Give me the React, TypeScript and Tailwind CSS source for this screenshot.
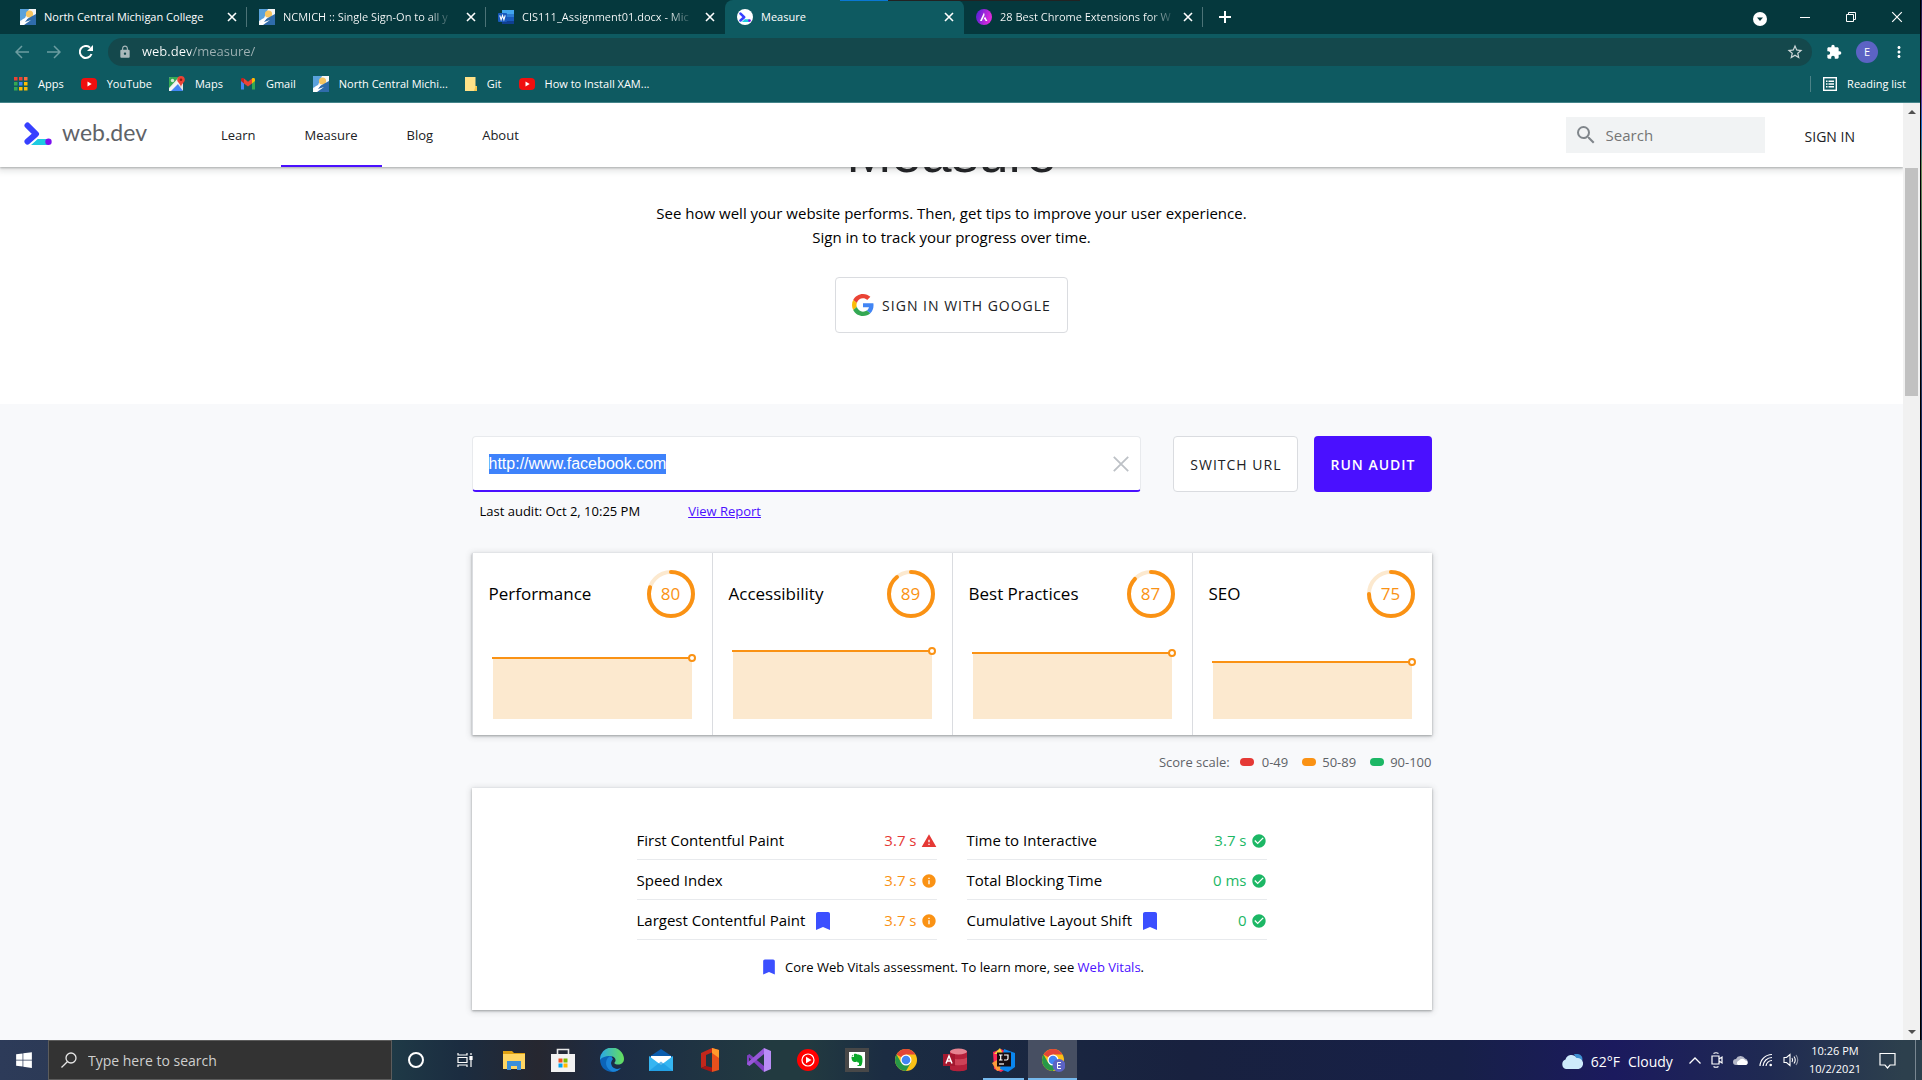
import { useEffect, useRef, type ReactNode } from "react";
import {
  MdBookmark,
  MdCheckCircle,
  MdExtension,
  MdInfo,
  MdLock,
  MdMoreVert,
  MdSearch,
  MdStarBorder,
  MdWarning,
} from "react-icons/md";
import { FaWindows } from "react-icons/fa";

/* ---------- Site and favicon drawings ---------- */

function CollegeIcon() {
  return (
    <svg viewBox="0 0 16 16" className="size-4 shrink-0" aria-hidden="true">
      <rect width="16" height="16" fill="#f4f6f8" />
      <path d="M0 0h9L5 9l-5 3z" fill="#5aa2dc" />
      <circle cx="9.5" cy="5" r="3.6" fill="#f7c560" />
      <path d="M7 10 16 5v11H1z" fill="#2f6cab" />
      <path d="m0 16 3-6 5-1-3 4 6-2-7 5z" fill="#fff" />
    </svg>
  );
}

function WordIcon() {
  return (
    <svg viewBox="0 0 16 16" className="size-4 shrink-0" aria-hidden="true">
      <path d="M4 1h12v4H4z" fill="#41a5ee" />
      <path d="M4 5h12v3H4z" fill="#2b7cd3" />
      <path d="M4 8h12v4H4z" fill="#185abd" />
      <path d="M4 12h12v3H4z" fill="#103f91" />
      <rect y="4" width="9" height="9" rx="1" fill="#185abd" />
      <path d="m1.8 6.3 1.3 4.4 1.4-4.2 1.4 4.2 1.3-4.4" fill="none" stroke="#fff" strokeWidth="1.1" />
    </svg>
  );
}

function WebDevMark({ className }: { className: string }) {
  return (
    <svg viewBox="0 0 28 23" className={className} aria-hidden="true">
      <path d="M14 17h10v6H8z" fill="#1ecbe1" />
      <path d="M3.500 3.500 12 12 3.500 19.500" fill="none" stroke="#3740ff" strokeWidth="6" strokeLinecap="round" strokeLinejoin="round" />
      <path d="m7 23 7-6 5 6z" fill="#1ecbe1" />
      <circle cx="24.500" cy="19.800" r="3.200" fill="#7b0ff0" />
    </svg>
  );
}

function WebDevFavicon() {
  return (
    <span className="flex size-4 shrink-0 items-center justify-center rounded-full bg-white">
      <WebDevMark className="h-2.5 w-3" />
    </span>
  );
}

function AstraIcon() {
  return (
    <svg viewBox="0 0 16 16" className="size-4 shrink-0" aria-hidden="true">
      <defs>
        <linearGradient id="astra" x1="0" y1="0" x2="1" y2="0.3">
          <stop offset="0" stopColor="#4a1fd6" />
          <stop offset="1" stopColor="#e02bdc" />
        </linearGradient>
      </defs>
      <circle cx="8" cy="8" r="8" fill="url(#astra)" />
      <path d="M8 3.500 4 12h1.800L8.600 6zM9 7.500l-1.400 2.800h1.200l.8 1.700h1.800z" fill="#fff" />
    </svg>
  );
}

function YouTubeIcon() {
  return (
    <svg viewBox="0 0 16 16" className="size-4 shrink-0" aria-hidden="true">
      <rect y="2" width="16" height="12" rx="4" fill="#f00f0f" />
      <path d="m6.500 5.500 4.200 2.500-4.200 2.500z" fill="#fff" />
    </svg>
  );
}

function AppsIcon() {
  const colours = ["#ea4335", "#ea4335", "#fb6a3d", "#34a853", "#4285f4", "#fbbc04", "#34a853", "#fbbc04", "#fbbc04"];
  return (
    <svg viewBox="0 0 14 14" className="size-3.5 shrink-0" aria-hidden="true">
      {colours.map((c, i) => (
        <rect key={i} x={(i % 3) * 5} y={Math.floor(i / 3) * 5} width="3.500" height="3.500" fill={c} />
      ))}
    </svg>
  );
}

function MapsIcon() {
  return (
    <svg viewBox="0 0 16 16" className="size-4 shrink-0" aria-hidden="true">
      <rect y="1" width="14" height="14" rx="1.500" fill="#e8e8e8" />
      <path d="M0 2.500A1.500 1.500 0 0 1 1.500 1H10L0 12z" fill="#34a853" />
      <path d="m0 15 8-8 6 8z" fill="#4285f4" />
      <path d="M0 13 11 2l2 2L2 15H0z" fill="#f5f5f5" />
      <circle cx="3.500" cy="4.500" r="1.700" fill="#cfe9d5" />
      <path d="M12 0a3.800 3.800 0 0 0-3.800 3.800C8.200 6.500 11 7 12 11c1-4 3.800-4.500 3.800-7.200A3.800 3.800 0 0 0 12 0" fill="#ea4335" />
      <circle cx="12" cy="3.800" r="1.300" fill="#8c1d14" />
    </svg>
  );
}

function GmailIcon() {
  return (
    <svg viewBox="0 0 16 16" className="size-4 shrink-0" aria-hidden="true">
      <path d="M1 4v9.500h3V7z" fill="#4285f4" />
      <path d="M12 7v6.500h3V4z" fill="#34a853" />
      <path d="M1 3.500C1 2 3 1.700 4 2.500V7.500L1 5z" fill="#c5221f" />
      <path d="m4 2.500 4 3.200 4-3.200v5L8 10.500l-4-3z" fill="#ea4335" />
      <path d="M12 2.500c1-.8 3-.5 3 1V5l-3 2.500z" fill="#fbbc04" />
    </svg>
  );
}

function FolderIcon() {
  return (
    <svg viewBox="0 0 12 14" className="h-3.5 w-3 shrink-0" aria-hidden="true">
      <path d="M0 0h10.500v9H12v5H0z" fill="#ffe288" />
      <path d="M10.500 9H12v5H9z" fill="#f3c64d" />
    </svg>
  );
}

function GoogleG() {
  return (
    <svg viewBox="0 0 48 48" className="size-[22px] shrink-0" aria-hidden="true">
      <path fill="#EA4335" d="M24 9.500c3.540 0 6.710 1.220 9.210 3.600l6.850-6.850C35.900 2.380 30.470 0 24 0 14.620 0 6.510 5.380 2.560 13.220l7.980 6.190C12.430 13.720 17.740 9.500 24 9.500z" />
      <path fill="#4285F4" d="M46.980 24.550c0-1.570-.15-3.090-.38-4.550H24v9.020h12.940c-.58 2.960-2.260 5.480-4.780 7.180l7.730 6c4.510-4.180 7.090-10.360 7.090-17.650z" />
      <path fill="#FBBC05" d="M10.530 28.590c-.48-1.450-.76-2.990-.76-4.590s.27-3.140.76-4.590l-7.980-6.190C.92 16.460 0 20.120 0 24c0 3.880.92 7.540 2.560 10.780l7.970-6.190z" />
      <path fill="#34A853" d="M24 48c6.480 0 11.930-2.130 15.890-5.810l-7.730-6c-2.150 1.450-4.920 2.300-8.160 2.300-6.260 0-11.570-4.220-13.470-9.910l-7.980 6.190C6.510 42.620 14.620 48 24 48z" />
    </svg>
  );
}

function Cross({ className }: { className: string }) {
  return (
    <svg viewBox="0 0 10 10" className={className} fill="none" stroke="currentColor" aria-hidden="true">
      <path d="m1 1 8 8M9 1 1 9" />
    </svg>
  );
}

/* ---------- Browser chrome ---------- */

const tabs: { title: string; icon: ReactNode; active?: boolean }[] = [
  { title: "North Central Michigan College", icon: <CollegeIcon /> },
  { title: "NCMICH :: Single Sign-On to all y", icon: <CollegeIcon /> },
  { title: "CIS111_Assignment01.docx - Mic", icon: <WordIcon /> },
  { title: "Measure", icon: <WebDevFavicon />, active: true },
  { title: "28 Best Chrome Extensions for W", icon: <AstraIcon /> },
];

function TabStrip() {
  return (
    <div className="relative flex h-[34px] items-stretch bg-[#05383d] pl-2 text-white">
      <div className="absolute top-0 left-[840px] flex h-px w-60">
        <span className="w-12 bg-[#0a78d4]" />
        <span className="flex-1 bg-[#222]" />
      </div>
      <div role="tablist" className="flex">
        {tabs.map((t, i) => {
          const divider = !t.active && i !== 2;
          const fades = i !== 0 && !t.active;
          return (
            <div
              key={t.title}
              className={`flex w-[239px] items-center pl-3 ${t.active ? "rounded-t-lg bg-[#0e5a61]" : ""}`}
            >
              {t.icon}
              <button
                type="button"
                role="tab"
                aria-selected={!!t.active}
                className="ml-2 min-w-0 flex-1 text-left text-[11px] whitespace-nowrap"
              >
                <span
                  className={
                    fades ? "bg-linear-to-r from-white from-88% to-[#2f5a5e] bg-clip-text text-transparent" : ""
                  }
                >
                  {t.title}
                </span>
              </button>
              <button type="button" aria-label={`Close ${t.title}`} className="ml-1 flex size-4 items-center justify-center">
                <Cross className="size-2.5 stroke-[1.600]" />
              </button>
              <span className={`ml-1.5 h-5 w-px ${divider ? "bg-[#4c7377]" : ""}`} />
            </div>
          );
        })}
      </div>
      <button type="button" aria-label="New tab" className="flex w-11 items-center justify-center">
        <svg viewBox="0 0 12 12" className="size-3" stroke="currentColor" strokeWidth="2" aria-hidden="true">
          <path d="M6 0v12M0 6h12" />
        </svg>
      </button>
      <div className="ml-auto flex items-center">
        <button type="button" aria-label="Search tabs" className="mt-1 mr-1 flex w-9 justify-center">
          <svg viewBox="0 0 14 14" className="size-3.5" aria-hidden="true">
            <circle cx="7" cy="7" r="7" fill="#fff" />
            <path d="M4 5.500h6L7 9z" fill="#05383d" />
          </svg>
        </button>
        <button type="button" aria-label="Minimize" className="flex h-7 w-[46px] items-center justify-center">
          <span className="h-px w-2.5 bg-white" />
        </button>
        <button type="button" aria-label="Restore" className="flex h-7 w-[46px] items-center justify-center">
          <svg viewBox="0 0 10 10" className="size-2.5" fill="none" stroke="currentColor" aria-hidden="true">
            <path d="M.5 2.500h7v7h-7zM2.500 2.500v-2h7v7h-2" />
          </svg>
        </button>
        <button type="button" aria-label="Close" className="flex h-7 w-[46px] items-center justify-center">
          <Cross className="size-3" />
        </button>
      </div>
    </div>
  );
}

function Toolbar() {
  return (
    <div className="flex h-9 items-center bg-[#0e5a61] pr-3 pl-2 text-white">
      <button type="button" aria-label="Back" className="flex w-7 justify-center text-[#6c9da1]">
        <svg viewBox="0 0 14 14" className="size-3.5" fill="none" stroke="currentColor" strokeWidth="1.500" aria-hidden="true">
          <path d="M14 7H1M7 1 1 7l6 6" />
        </svg>
      </button>
      <button type="button" aria-label="Forward" className="ml-1 flex w-7 justify-center text-[#6c9da1]">
        <svg viewBox="0 0 14 14" className="size-3.5" fill="none" stroke="currentColor" strokeWidth="1.500" aria-hidden="true">
          <path d="M0 7h13M7 1l6 6-6 6" />
        </svg>
      </button>
      <button type="button" aria-label="Reload" className="ml-1 flex w-7 justify-center">
        <svg viewBox="0 0 14 14" className="size-3.5" aria-hidden="true">
          <path d="M12.500 9A6 6 0 1 1 11 2.600" fill="none" stroke="#fff" strokeWidth="2" />
          <path d="M14 0v6H8z" fill="#fff" />
        </svg>
      </button>
      <div className="ml-2 flex h-7 flex-1 items-center rounded-full bg-[#14484c] pr-2 pl-2.5">
        <MdLock className="size-3.5 text-[#a9b8ba]" />
        <input
          aria-label="Address"
          defaultValue="web.dev/measure/"
          className="ml-2.5 flex-1 bg-linear-to-r from-white from-[49px] to-[#9fb2b4] to-[49px] bg-clip-text text-[13px] text-transparent outline-none"
        />
        <button type="button" aria-label="Bookmark this page">
          <MdStarBorder className="size-[18px] text-[#cfd8d9]" />
        </button>
      </div>
      <button type="button" aria-label="Extensions" className="ml-3.5">
        <MdExtension className="size-4" />
      </button>
      <button type="button" aria-label="Profile" className="ml-3.5 size-[22px] rounded-full bg-[#5c63c4] text-[11px]">
        E
      </button>
      <button type="button" aria-label="Menu" className="ml-3">
        <MdMoreVert className="size-[18px]" />
      </button>
    </div>
  );
}

const bookmarks: { label: string; icon: ReactNode }[] = [
  { label: "Apps", icon: <AppsIcon /> },
  { label: "YouTube", icon: <YouTubeIcon /> },
  { label: "Maps", icon: <MapsIcon /> },
  { label: "Gmail", icon: <GmailIcon /> },
  { label: "North Central Michi...", icon: <CollegeIcon /> },
  { label: "Git", icon: <FolderIcon /> },
  { label: "How to Install XAM...", icon: <YouTubeIcon /> },
];

function BookmarksBar() {
  return (
    <div className="flex h-[33px] items-center border-b border-[#44848a] bg-[#0e5a61] px-3.5 pb-1 text-[11px] text-white">
      <nav aria-label="Bookmarks" className="flex gap-[17px]">
        {bookmarks.map((b) => (
          <a key={b.label} href="#" className="flex items-center gap-2.5 whitespace-nowrap">
            {b.icon}
            {b.label}
          </a>
        ))}
      </nav>
      <span className="ml-auto h-4 w-px bg-[#4c8287]" />
      <button type="button" className="ml-3 flex items-center gap-2.5 whitespace-nowrap">
        <svg viewBox="0 0 14 14" className="size-3.5" fill="none" stroke="currentColor" aria-hidden="true">
          <rect x=".7" y=".7" width="12.600" height="12.600" strokeWidth="1.400" />
          <path d="M3 4.200h1.500M3 7h1.500M3 9.800h1.500M5.500 4.200H11M5.500 7H11M5.500 9.800H11" strokeWidth="1.400" />
        </svg>
        Reading list
      </button>
    </div>
  );
}

/* ---------- Page ---------- */

const navLinks = ["Learn", "Measure", "Blog", "About"];

function SiteHeader() {
  return (
    <header className="relative z-10 flex h-16 shrink-0 items-center bg-white shadow-[0_1px_2px_rgba(60,64,67,0.35),0_2px_6px_2px_rgba(60,64,67,0.15)]">
      <a href="#" className="ml-6 flex w-[173px] items-center gap-2.5 pb-1">
        <WebDevMark className="h-[23px] w-7" />
        <span className="pb-0.5 font-['Lato'] text-[23px] leading-7 text-[#5f6368]">web.dev</span>
      </a>
      <nav className="flex h-full gap-px text-[13px] font-medium text-[#202124]">
        {navLinks.map((l) => (
          <a
            key={l}
            href="#"
            className={`flex items-center border-b-2 px-6 pt-1 ${l === "Measure" ? "border-[#4a10ff]" : "border-transparent"}`}
          >
            {l}
          </a>
        ))}
      </nav>
      <label className="ml-auto flex h-9 w-[199px] items-center gap-2 bg-[#f1f3f4] pl-2">
        <MdSearch className="size-6 text-[#80868b]" />
        <input
          type="search"
          aria-label="Search"
          placeholder="Search"
          className="w-32 bg-transparent text-[15px] outline-none placeholder:text-[#757575]"
        />
      </label>
      <a href="#" className="mr-12 ml-10 pt-0.5 text-[14px] font-medium text-[#202124]">
        SIGN IN
      </a>
    </header>
  );
}

function Hero() {
  return (
    <section className="flex shrink-0 flex-col items-center bg-white pb-[71px]">
      <h1 className="-mt-11 font-['Liberation_Sans'] text-[54px] leading-[60px] text-[#202124]">Measure</h1>
      <p className="mt-4.5 text-center text-[15px] leading-6 text-black">
        See how well your website performs. Then, get tips to improve your user experience.
        <br />
        Sign in to track your progress over time.
      </p>
      <button
        type="button"
        className="mt-7 flex h-14 items-center gap-2 rounded-sm border border-[#dadce0] px-4 text-[14px] font-medium tracking-[1px] text-[#202124]"
      >
        <GoogleG />
        SIGN IN WITH GOOGLE
      </button>
    </section>
  );
}

function AuditForm() {
  const field = useRef<HTMLInputElement>(null);
  useEffect(() => {
    field.current?.focus();
    field.current?.select();
  }, []);
  return (
    <form onSubmit={(e) => e.preventDefault()}>
      <div className="flex items-start">
        <div className="flex h-14 flex-1 items-center rounded-sm border border-b-2 border-[#e8eaed] border-b-[#4a10ff] bg-white pr-2.5 pl-4">
          <input
            ref={field}
            type="text"
            aria-label="Website URL"
            defaultValue="http://www.facebook.com"
            className="min-w-0 flex-1 font-['Liberation_Sans'] text-base leading-5 outline-none selection:bg-[#3e82fb] selection:text-white"
          />
          <button type="button" aria-label="Clear" className="text-[#bdc1c6]">
            <Cross className="size-[18px]" />
          </button>
        </div>
        <button
          type="button"
          className="ml-8 h-14 rounded-sm border border-[#dadce0] bg-white px-4 text-[14px] font-medium tracking-[1px] text-[#202124]"
        >
          SWITCH URL
        </button>
        <button
          type="submit"
          className="ml-4 h-14 rounded-sm bg-[#4a10ff] px-4 text-[14px] font-semibold tracking-[1px] text-white"
        >
          RUN AUDIT
        </button>
      </div>
      <p className="mt-[9px] flex gap-12 pl-2 text-[13px] leading-5 text-black">
        <span>Last audit: Oct 2, 10:25 PM</span>
        <a href="#" className="text-[#4a10ff] underline">
          View Report
        </a>
      </p>
    </form>
  );
}

const scores = [
  { name: "Performance", score: 80 },
  { name: "Accessibility", score: 89 },
  { name: "Best Practices", score: 87 },
  { name: "SEO", score: 75 },
];

function Gauge({ score }: { score: number }) {
  return (
    <span className="relative mr-px flex size-12 items-center justify-center text-[17px] font-medium text-[#fa9214]">
      <svg viewBox="0 0 48 48" className="absolute inset-0 -rotate-90" fill="none" strokeWidth="4" aria-hidden="true">
        <circle cx="24" cy="24" r="22" stroke="#fce9cf" />
        <circle
          cx="24"
          cy="24"
          r="22"
          stroke="#fa9214"
          pathLength="100"
          strokeDasharray={`${score} 100`}
          strokeLinecap="round"
        />
      </svg>
      {score}
    </span>
  );
}

function ScoreCard({ name, score }: { name: string; score: number }) {
  const y = 76 - Math.round(score * 0.76);
  return (
    <article className="flex flex-1 flex-col border-l border-[#dadce0] px-4 pt-[17px] pb-4">
      <div className="flex items-center justify-between">
        <h2 className="text-[17px] font-medium text-black">{name}</h2>
        <Gauge score={score} />
      </div>
      <svg viewBox="0 0 207 76" className="mt-[25px] h-[76px] w-full overflow-visible" role="img" aria-label={`${name} history`}>
        <rect x="4" y={y} width="199" height={76 - y} fill="#fce9cf" />
        <path d={`M3 ${y}h200`} stroke="#fa9214" strokeWidth="2" />
        <circle cx="203" cy={y} r="3" fill="#fff" stroke="#fa9214" strokeWidth="2" />
      </svg>
    </article>
  );
}

const cardShadow = "shadow-[0_1px_2px_rgba(60,64,67,0.4),0_1px_6px_1px_rgba(60,64,67,0.18)]";

function ScoreLegend() {
  return (
    <div className="mt-[15px] flex items-center justify-end text-[13px] leading-6 text-[#5f6368]">
      Score scale:
      <span className="mr-2 ml-2.5 h-2 w-3.5 rounded-full bg-[#e53935]" />
      0-49
      <span className="mr-1.5 ml-3.5 h-2 w-3.5 rounded-full bg-[#fa9214]" />
      50-89
      <span className="mr-1.5 ml-3.5 h-2 w-3.5 rounded-full bg-[#1cb765]" />
      90-100
    </div>
  );
}

type Level = "fail" | "warn" | "pass";
type Metric = { name: string; value: string; level: Level; vital?: boolean };

const levelColour: Record<Level, string> = {
  fail: "text-[#e53935]",
  warn: "text-[#fa9214]",
  pass: "text-[#1cb765]",
};
const levelIcon: Record<Level, ReactNode> = {
  fail: <MdWarning className="size-4" />,
  warn: <MdInfo className="size-4" />,
  pass: <MdCheckCircle className="size-4" />,
};

const metricColumns: Metric[][] = [
  [
    { name: "First Contentful Paint", value: "3.7 s", level: "fail" },
    { name: "Speed Index", value: "3.7 s", level: "warn" },
    { name: "Largest Contentful Paint", value: "3.7 s", level: "warn", vital: true },
  ],
  [
    { name: "Time to Interactive", value: "3.7 s", level: "pass" },
    { name: "Total Blocking Time", value: "0 ms", level: "pass" },
    { name: "Cumulative Layout Shift", value: "0", level: "pass", vital: true },
  ],
];

function MetricsPanel() {
  return (
    <section className={`mt-3.5 bg-white pt-8 pb-[31px] ${cardShadow}`}>
      <div className="mx-auto grid max-w-[630px] grid-cols-2 gap-[30px]">
        {metricColumns.map((col, i) => (
          <dl key={i}>
            {col.map((m) => (
              <div key={m.name} className="flex h-10 items-center justify-between border-b border-[#e8eaed] pt-0.5 text-[15px]">
                <dt className="flex items-center gap-1.5 text-black">
                  {m.name}
                  {m.vital && <MdBookmark className="size-6 text-[#3b4fff]" />}
                </dt>
                <dd className={`flex items-center gap-1 ${levelColour[m.level]}`}>
                  {m.value}
                  {levelIcon[m.level]}
                </dd>
              </div>
            ))}
          </dl>
        ))}
      </div>
      <p className="mt-[15px] flex items-center justify-center gap-1.5 text-[13px] leading-6 text-black">
        <MdBookmark className="size-5 text-[#3b4fff]" />
        <span>
          Core Web Vitals assessment. To learn more, see{" "}
          <a href="#" className="text-[#4a10ff]">
            Web Vitals
          </a>
          .
        </span>
      </p>
    </section>
  );
}

function Scrollbar() {
  return (
    <div className="flex w-[17px] shrink-0 flex-col items-center bg-[#f1f1f1]">
      <button type="button" aria-label="Scroll up" className="flex h-[17px] w-full items-center justify-center">
        <svg viewBox="0 0 8 4" className="h-1 w-2" aria-hidden="true">
          <path d="M4 0 8 4H0z" fill="#505050" />
        </svg>
      </button>
      <div className="mt-12 h-[228px] w-[13px] bg-[#c1c1c1]" />
      <button type="button" aria-label="Scroll down" className="mt-auto flex h-[17px] w-full items-center justify-center">
        <svg viewBox="0 0 8 4" className="h-1 w-2" aria-hidden="true">
          <path d="M4 4 0 0h8z" fill="#505050" />
        </svg>
      </button>
    </div>
  );
}

/* ---------- Taskbar ---------- */

function ChromeIcon({ badge }: { badge?: boolean }) {
  return (
    <svg viewBox="0 0 24 24" className="size-6" aria-hidden="true">
      <circle cx="12" cy="12" r="11" fill="#fbc116" />
      <path d="M12 12 2.500 6.500A11 11 0 0 1 21.500 6.500H12z" fill="#e24537" />
      <path d="M2.500 6.500A11 11 0 0 0 12 23l4.800-8.200L12 12l-4.800 2.700z" fill="#279847" />
      <circle cx="12" cy="12" r="5.500" fill="#fff" />
      <circle cx="12" cy="12" r="4.300" fill="#4285f4" />
      {badge && (
        <>
          <circle cx="18" cy="17.500" r="6.500" fill="#5c63c4" />
          <path d="M20 14.500h-3.500v6H20M16.500 17.500h3" fill="none" stroke="#fff" />
        </>
      )}
    </svg>
  );
}

const apps: { name: string; icon: ReactNode; state?: "open" | "active" }[] = [
  {
    name: "File Explorer",
    icon: (
      <svg viewBox="0 0 24 24" className="size-6" aria-hidden="true">
        <path d="M1 3h9l2 2h11v15H1z" fill="#dfa112" />
        <path d="M1 6h22v15H1z" fill="#ffd663" />
        <path d="M5 13h14v9h-4v-4H9v4H5z" fill="#3b8fd9" />
      </svg>
    ),
  },
  {
    name: "Microsoft Store",
    icon: (
      <svg viewBox="0 0 24 24" className="size-6" aria-hidden="true">
        <path d="M6.500 7V1.500h11V7" fill="none" stroke="#e8e8e8" strokeWidth="1.600" />
        <path d="M0 6h24v18H0z" fill="#f2f2f2" />
        <path d="M7.500 10.500h4v4h-4z" fill="#f25022" />
        <path d="M12.500 10.500h4v4h-4z" fill="#7fba00" />
        <path d="M7.500 15.500h4v4h-4z" fill="#00a4ef" />
        <path d="M12.500 15.500h4v4h-4z" fill="#ffb900" />
      </svg>
    ),
  },
  {
    name: "Edge",
    icon: (
      <svg viewBox="0 0 24 24" className="size-6" aria-hidden="true">
        <defs>
          <linearGradient id="edgeTop" x1="0" x2="1">
            <stop offset="0" stopColor="#2aa8e8" />
            <stop offset="1" stopColor="#66e05a" />
          </linearGradient>
        </defs>
        <path d="M12 0a12 12 0 1 0 9 20c-3 2-8 1-9.500-2.500-1.500-3 .5-6 .5-6z" fill="#0c64b8" />
        <path d="M0 12A12 12 0 0 1 24 11c0 4-3.500 6-7 5.500-3-.5-3-1.500-2-2.500 1.500-2 0-6-5-6C5 8 1 10 0 12" fill="url(#edgeTop)" />
        <path d="M9.500 8.500C4 12 5 21 13 23.800a12 12 0 0 0 8-3.800c-4 2-8 1-9.500-2.500-1-3 0-5 1.500-6.500-.8-1.500-2-2.300-3.500-2.500" fill="#1b84d8" />
      </svg>
    ),
  },
  {
    name: "Mail",
    icon: (
      <svg viewBox="0 0 24 24" className="size-6" aria-hidden="true">
        <path d="M0 9 12 1l12 8v2H0z" fill="#0a5cad" />
        <path d="M2 8h20v9H2z" fill="#fff" />
        <path d="M0 8v15h24V8l-12 9z" fill="#35b5f1" />
        <path d="m0 23 12-9.500L24 23z" fill="#1d98e0" opacity=".7" />
      </svg>
    ),
  },
  {
    name: "Office",
    icon: (
      <svg viewBox="0 0 24 24" className="size-6" aria-hidden="true">
        <path d="m3 5 11-5v4.500L8 7v11l-5 2z" fill="#c3271b" />
        <path d="m14 0 7 2v20l-7 2z" fill="#e8501c" />
        <path d="m14 0 7 2v8l-7-5z" fill="#ff9a2b" />
        <path d="m3 20 5-2 6 1.500V24z" fill="#a51515" />
      </svg>
    ),
  },
  {
    name: "Visual Studio",
    icon: (
      <svg viewBox="0 0 24 24" className="size-6" aria-hidden="true">
        <path d="M0 7.500 2.500 6 17 18v6L2 9.500V15l-2 1z" fill="#7e3fc0" />
        <path d="M0 16.500 2.500 18 17 6V0L0 15z" fill="#9757d8" />
        <path d="m17 0 7 3v18l-7 3z" fill="#b98cf5" />
      </svg>
    ),
  },
  {
    name: "YouTube Music",
    icon: (
      <svg viewBox="0 0 24 24" className="size-6" aria-hidden="true">
        <circle cx="12" cy="12" r="11" fill="#f00" />
        <circle cx="12" cy="12" r="6" fill="none" stroke="#fff" strokeWidth="1.200" />
        <path d="m10 8.800 5.500 3.200-5.500 3.200z" fill="#fff" />
      </svg>
    ),
  },
  {
    name: "Evernote",
    icon: (
      <svg viewBox="0 0 24 24" className="size-6" aria-hidden="true">
        <path d="M0 0h24v24H0z" fill="#484848" />
        <path d="M4 4h16v16H4z" fill="#fff" />
        <path d="M9 6v3H6.500c0 3 1 5 4 5 1 0 1.500-.5 1.500-1 0 1 .5 1.500 2 1.700V17h-1.500v1H16c1.500-2 2-6 1-9.500C16 7 14 6.500 12.500 6.500 12 5.800 10 5.500 9 6M6.500 8.200 8.200 6.500v1.700z" fill="#0ba82b" />
      </svg>
    ),
  },
  { name: "Chrome", icon: <ChromeIcon /> },
  {
    name: "Access",
    icon: (
      <svg viewBox="0 0 24 24" className="size-6" aria-hidden="true">
        <path d="M7 3h17v18c0 3-17 3-17 0z" fill="#b5203a" />
        <path d="M7 9c0 3 17 3 17 0v6c0 3-17 3-17 0z" fill="#cf4257" />
        <ellipse cx="15.500" cy="3.500" rx="8.500" ry="3" fill="#e68391" />
        <path d="M0 6h12v12H0z" fill="#a4182f" />
        <path d="m3 15.500 3-7.500 3 7.500M4 13h4" fill="none" stroke="#fff" strokeWidth="1.500" />
      </svg>
    ),
  },
  {
    name: "IntelliJ IDEA",
    state: "open",
    icon: (
      <svg viewBox="0 0 24 24" className="size-6" aria-hidden="true">
        <path d="m1 4 8-3 6 3v16l-6 4-7-3z" fill="#fe2857" />
        <path d="m0 15 5-3 8 9-8 2z" fill="#fc9b3a" />
        <path d="m12 1 11 4v14l-7 5-8-3z" fill="#0a86ee" />
        <path d="m2 6 6-6 3 6z" fill="#f5d23b" />
        <path d="M5 4.500h14v14H5z" fill="#160d10" />
        <path d="M7 7h3.500M8.700 7v5M7 12h3.500M12 7h4v3.500q0 1.500-1.500 1.500H12" fill="none" stroke="#fff" strokeWidth="1.200" />
        <path d="M7 16h5" stroke="#fff" strokeWidth="1.200" />
      </svg>
    ),
  },
  { name: "Chrome profile", icon: <ChromeIcon badge />, state: "active" },
];

function Taskbar() {
  return (
    <footer className="flex h-10 shrink-0 items-stretch bg-[linear-gradient(to_right,#2d3b59_0%,#2c3a56_3%,#1f3b47_20%,#1b2c40_24%,#262730_28%,#1c2c45_32%,#223a40_40%,#223a40_42%,#1b2c42_46%,#18213f_62%,#172048_76%,#1b1a5e_84%,#1f2a52_92%,#2d404d_99%)] text-white">
      <button type="button" aria-label="Start" className="flex w-12 items-center justify-center">
        <FaWindows className="size-[18px]" />
      </button>
      <label className="flex w-[344px] items-center border border-[#5c5c5c] bg-[#333]">
        <svg viewBox="0 0 16 16" className="ml-3 size-4" fill="none" stroke="#e6e6e6" strokeWidth="1.300" aria-hidden="true">
          <circle cx="10" cy="6" r="5" />
          <path d="M6.300 9.700.5 15.500" />
        </svg>
        <input
          aria-label="Type here to search"
          placeholder="Type here to search"
          className="ml-[11px] flex-1 bg-transparent pt-0.5 text-sm outline-none placeholder:text-[#cfcfcf]"
        />
      </label>
      <button type="button" aria-label="Cortana" className="flex w-12 items-center justify-center">
        <span className="size-4 rounded-full border-2 border-white" />
      </button>
      <button type="button" aria-label="Task view" className="flex w-[49px] items-center justify-center">
        <svg viewBox="0 0 16 16" className="size-4" fill="none" stroke="#fff" strokeWidth="1.200" aria-hidden="true">
          <path d="M1 1v2h9V1M1 5.500h9v5H1zM1 15v-2h9v2M14 1v2M14 8v7" />
          <path d="M13 4.500h2v3h-2z" fill="#fff" />
        </svg>
      </button>
      {apps.map((a) => (
        <button
          key={a.name}
          type="button"
          aria-label={a.name}
          className={`flex flex-col items-center justify-center border-y-2 border-t-transparent ${
            a.state === "active"
              ? "w-[49px] border-b-[#76b9ed] bg-[#474f62] bg-clip-border"
              : a.state === "open"
                ? "mx-1 w-[41px] border-b-[#76b9ed]"
                : "w-[49px] border-b-transparent"
          }`}
        >
          {a.icon}
        </button>
      ))}
      <div className="ml-auto flex items-center">
        <button type="button" className="flex items-center gap-2 pt-0.5 text-[14px] whitespace-nowrap">
          <svg viewBox="0 0 22 16" className="h-4 w-[22px]" aria-hidden="true">
            <path d="M13 1h4a5 5 0 0 1 4 7L16 7z" fill="#3d8fd1" />
            <path d="M5 16a5 5 0 0 1-.5-9.500A6 6 0 0 1 15.500 5a5.500 5.500 0 0 1 2 11z" fill="#cdeafb" />
          </svg>
          <span>62°F</span>
          <span>Cloudy</span>
        </button>
        <div className="ml-4 flex items-center gap-2.5">
          <svg viewBox="0 0 12 7" className="h-[7px] w-3" fill="none" stroke="#fff" strokeWidth="1.300" aria-hidden="true">
            <path d="m.5 6.500 5.500-5.500 5.500 5.500" />
          </svg>
          <svg viewBox="0 0 12 16" className="h-4 w-3" fill="none" stroke="#fff" strokeWidth="1.200" aria-hidden="true">
            <path d="M1 4h7v8H1zM8 7l3-2v6L8 9M2.500 1.500q2.500-1.500 5 0M2.500 14.500q2.500 1.500 5 0" />
          </svg>
          <svg viewBox="0 0 16 10" className="h-2.5 w-4" aria-hidden="true">
            <path d="M3 10a3 3 0 0 1 0-6 5 5 0 0 1 9-.5A3.500 3.500 0 0 1 13 10z" fill="#b5b8c8" />
            <path d="M5 10a2.500 2.500 0 0 1 1-4.500 4 4 0 0 1 6.500 0A2.300 2.300 0 0 1 13 10z" fill="#fff" />
          </svg>
          <svg viewBox="0 0 14 14" className="size-3.5" fill="none" stroke="#fff" strokeWidth="1.200" aria-hidden="true">
            <path d="M1 13A12 12 0 0 1 13 1.500M4 13a9 9 0 0 1 9-8.500M7 13a6 6 0 0 1 6-5.500" />
            <circle cx="11.700" cy="12" r="1.300" fill="#fff" stroke="none" />
          </svg>
          <svg viewBox="0 0 16 14" className="h-3.5 w-4" fill="none" stroke="#fff" strokeWidth="1.100" aria-hidden="true">
            <path d="M1 4.500h2.500L7 1.500v11L3.500 9.500H1zM9 5q1.300 2 0 4M11 3.500q2.500 3.500 0 7" />
            <path d="M13 2q3.500 5 0 10" opacity=".5" />
          </svg>
        </div>
        <div className="ml-2.5 text-center text-[11px] leading-[18px] whitespace-nowrap">
          <div>10:26 PM</div>
          <div>10/2/2021</div>
        </div>
        <button type="button" aria-label="Notifications" className="mr-[19px] ml-[18px]">
          <svg viewBox="0 0 17 17" className="size-[17px]" fill="none" stroke="#fff" strokeWidth="1.200" aria-hidden="true">
            <path d="M1 1.500h15v11.500h-5l-2.500 3-2.500-3H1z" />
          </svg>
        </button>
        <span className="mr-1.5 h-10 w-px bg-[#7a8791]" />
      </div>
    </footer>
  );
}

export default function App() {
  return (
    <div className="flex h-screen flex-col overflow-hidden bg-[#f8f9fb] font-['Open_Sans','Noto_Sans',sans-serif]">
      <div className="flex min-h-0 flex-1">
        <div className="flex min-w-0 flex-1 flex-col">
          <TabStrip />
          <Toolbar />
          <BookmarksBar />
          <div className="flex min-h-0 flex-1">
            <div className="flex min-w-0 flex-1 flex-col overflow-hidden">
              <SiteHeader />
              <main className="flex min-h-0 flex-1 flex-col overflow-hidden">
                <Hero />
                <div className="mx-auto w-full max-w-[960px] shrink-0 pt-8">
                  <AuditForm />
                  <div className={`mt-8 flex bg-white ${cardShadow}`}>
                    {scores.map((s) => (
                      <ScoreCard key={s.name} name={s.name} score={s.score} />
                    ))}
                  </div>
                  <ScoreLegend />
                  <MetricsPanel />
                </div>
              </main>
            </div>
            <Scrollbar />
          </div>
        </div>
        <div className="w-px bg-black" />
        <div className="w-px bg-[linear-gradient(to_bottom,#101c4a,#8a2a8a_8%,#1b6ed0_12%,#6a8a5a_16%,#1b2c60_40%,#2a4a9a_70%,#101c3a)]" />
      </div>
      <Taskbar />
    </div>
  );
}
